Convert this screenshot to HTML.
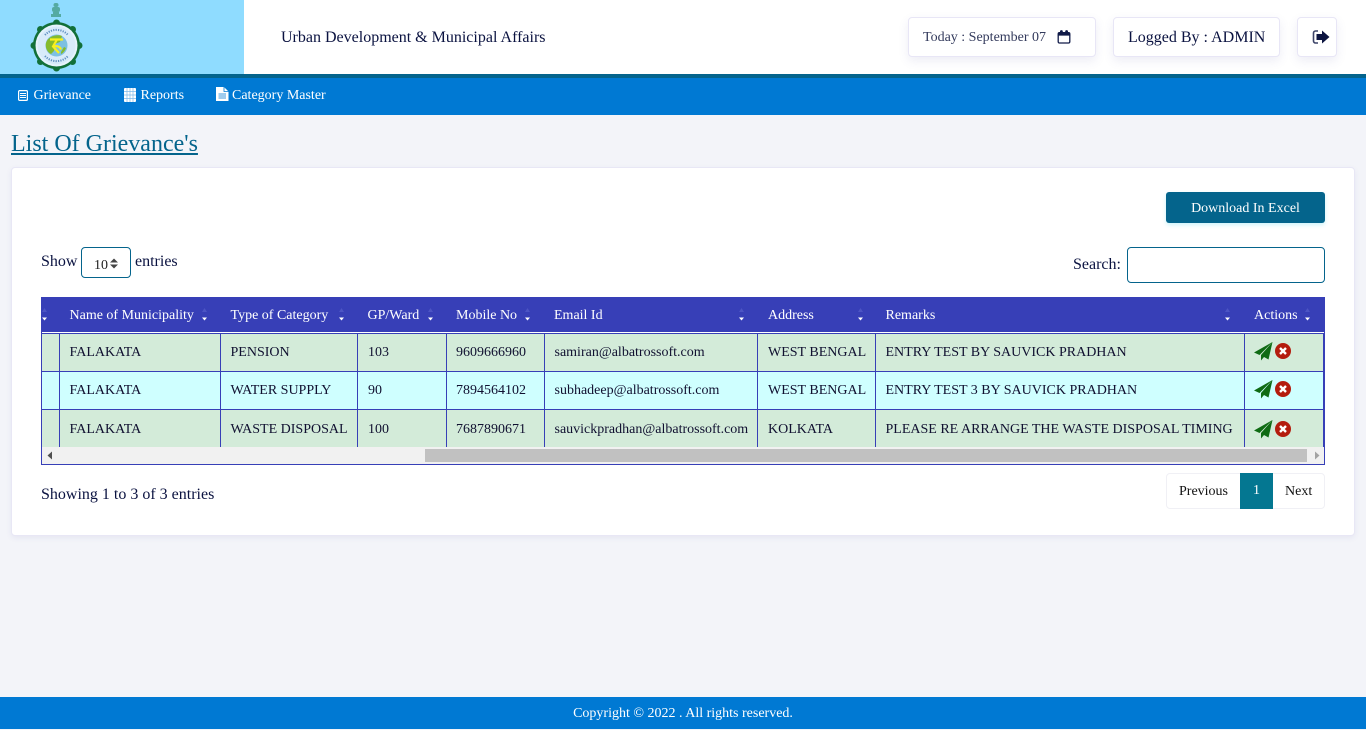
<!DOCTYPE html>
<html><head><meta charset="utf-8"><title>List Of Grievance's</title>
<style>
*{box-sizing:border-box}
html,body{margin:0;padding:0;width:1366px;height:729px;overflow:hidden;background:#f3f4f9;font-family:"Liberation Serif",serif;color:#0a1240}
.a{position:absolute;white-space:nowrap}
.box{position:absolute;background:#fff;border:1px solid #e8e6f6;border-radius:4px;box-shadow:0 4px 10px rgba(80,80,160,.1)}
.nav{color:#fff;font-size:14px;line-height:16px;top:88px}
.th{color:#fff;font-size:14px;line-height:16px;top:308px}
.td{color:#101030;font-size:14px;line-height:16px}
.v{position:absolute;width:1px;background:#373fb7;top:333px;height:114px}
.h{position:absolute;height:1px;left:42px;width:1282px;background:#373fb7}
.s{position:absolute;top:308px;width:7px;height:13px}
</style></head><body>
<div class="a" style="left:0;top:0;width:1366px;height:74px;background:#fff"></div>
<div class="a" style="left:0;top:0;width:244px;height:74px;background:#8fdcff"></div>
<div class="a" style="left:0;top:74px;width:1366px;height:4px;background:#04648c"></div>
<div class="a" style="left:0;top:78px;width:1366px;height:37px;background:#0079d3"></div>

<svg class="a" style="left:28px;top:0" width="56" height="72" viewBox="0 0 56 72">
<g fill="#2e8a66" opacity=".6"><rect x="25.500" y="3" width="5" height="4" rx="2"/><rect x="24" y="7" width="8" height="5" rx="2"/><rect x="25" y="12" width="6" height="2"/><rect x="23" y="14" width="10" height="3"/></g>
<circle cx="28.500" cy="45.500" r="23.500" fill="#127039"/>
<g fill="#127039"><circle cx="28.500" cy="23" r="3.500"/><circle cx="44.500" cy="29.500" r="3.500"/><circle cx="51" cy="45.500" r="3.500"/><circle cx="44.500" cy="61.500" r="3.500"/><circle cx="28.500" cy="68" r="3.500"/><circle cx="12.500" cy="61.500" r="3.500"/><circle cx="6" cy="45.500" r="3.500"/><circle cx="12.500" cy="29.500" r="3.500"/></g>
<circle cx="28.500" cy="45.500" r="21" fill="#e6f3fc"/>
<circle cx="28.500" cy="45.500" r="19" fill="#d8ebfa"/>
<path d="M17 35a15.500 15.500 0 0 1 23 0M17 56a15.500 15.500 0 0 0 23 0" fill="none" stroke="#5f8fc0" stroke-width="2" stroke-dasharray="1.200 1.200"/>
<circle cx="28.500" cy="45.500" r="11" fill="#7cc0e2"/>
<path d="M18 43c2-7 11-9 16-7l-2 6-5 2-1 7-3 3c-4-2-6-7-5-11z" fill="#86bb2c"/>
<path d="M33 52l3-5 2 1c-1 3-3 5-5 6z" fill="#86bb2c"/>
<path d="M22 39.500h13M29 39.500l-4 7 6 6.500M25 46.500c4-1 7 0 8 3" fill="none" stroke="#f8f01c" stroke-width="2.200"/>
</svg>

<div class="a" style="left:281px;top:29px;font-size:16px;line-height:18px;color:#0a1240">Urban Development &amp; Municipal Affairs</div>

<div class="box" style="left:908px;top:17px;width:188px;height:40px"></div>
<div class="a" style="left:923px;top:30px;font-size:14px;line-height:16px;color:#333a5c">Today : September 07</div>
<svg class="a" style="left:1057px;top:30px" width="14" height="14" viewBox="0 0 14 14"><path d="M1.200 5h11.600v6.800a1.200 1.200 0 0 1-1.200 1.200H2.400a1.200 1.200 0 0 1-1.200-1.200z" fill="none" stroke="#101a48" stroke-width="1.300"/><path d="M.6 5.500V3.500C.6 2.700 1.300 2 2.100 2H3V1.500a1.200 1.200 0 0 1 2.800 0V2h2.400v-.5a1.200 1.200 0 0 1 2.800 0V2h.9c.8 0 1.500.7 1.500 1.500v2z" fill="#101a48"/></svg>

<div class="box" style="left:1113px;top:17px;width:167px;height:40px"></div>
<div class="a" style="left:1128px;top:28px;font-size:16px;line-height:19px;color:#0a1240">Logged By : ADMIN</div>

<div class="box" style="left:1297px;top:17px;width:40px;height:40px"></div>
<svg class="a" style="left:1312px;top:29px" width="18" height="16" viewBox="0 0 18 16"><path d="M6 2H3.500A2 2 0 0 0 1.500 4v8a2 2 0 0 0 2 2H6" fill="none" stroke="#3c4468" stroke-width="1.600"/><path d="M10 1.500L17.500 8 10 14.500V11H4.500V5H10z" fill="#0c1440"/></svg>

<svg class="a" style="left:18px;top:90px" width="10" height="11" viewBox="0 0 10 11"><rect x=".6" y=".6" width="8.800" height="9.800" rx="1" fill="none" stroke="#fff" stroke-width="1.200"/><path d="M2 3.500h6M2 5.500h6M2 7.500h6" stroke="#fff"/></svg>
<div class="a nav" style="left:33.500px">Grievance</div>
<svg class="a" style="left:124px;top:88px" width="12" height="14" viewBox="0 0 12 14"><rect width="12" height="14" rx="1" fill="#fff"/><path d="M0 3.500h12M0 7h12M0 10.500h12M3 0v14M6 0v14M9 0v14" stroke="#7fbbea" stroke-width=".7"/></svg>
<div class="a nav" style="left:140.500px">Reports</div>
<svg class="a" style="left:216px;top:87px" width="13" height="14" viewBox="0 0 13 14"><path d="M0 0h8l4.500 4.500V14H0z" fill="#fff"/><path d="M8 0v4.500h4.500" fill="none" stroke="#0079d3" stroke-width=".8"/><path d="M2.500 7h7.500M2.500 9h7.500M2.500 11h7.500" stroke="#0079d3" stroke-width=".8"/></svg>
<div class="a nav" style="left:232px">Category Master</div>

<div class="a" style="left:11px;top:130px;font-size:24px;line-height:29px;color:#04648c;text-decoration:underline">List Of Grievance's</div>

<div class="a" style="left:11px;top:167px;width:1344px;height:369px;background:#fff;border:1px solid #e8e7f5;border-radius:4px;box-shadow:0 2px 6px rgba(80,80,160,.08)"></div>

<div class="a" style="left:1166px;top:192px;width:159px;height:31px;background:#04648c;border-radius:3px;color:#fff;font-size:14px;line-height:33px;text-align:center;box-shadow:0 2px 4px rgba(0,200,230,.2)">Download In Excel</div>

<div class="a" style="left:41px;top:253px;font-size:16px;line-height:18px">Show</div>
<div class="a" style="left:81px;top:247px;width:50px;height:31px;border:1px solid #04648c;border-radius:4px;background:#fff"></div>
<div class="a" style="left:94px;top:258px;font-size:14px;line-height:16px;color:#222">10</div>
<svg class="a" style="left:109px;top:258px" width="10" height="11" viewBox="0 0 10 11"><path d="M5 .5L9 4.500H1zM5 10.500L1 6.500h8z" fill="#444"/></svg>
<div class="a" style="left:135px;top:253px;font-size:16px;line-height:18px">entries</div>

<div class="a" style="left:1073px;top:256px;font-size:16px;line-height:18px">Search:</div>
<div class="a" style="left:1127px;top:247px;width:198px;height:36px;border:1px solid #04648c;border-radius:4px;background:#fff"></div>

<!-- table -->
<div class="a" style="left:41px;top:297px;width:1284px;height:168px;border:1px solid #373fb7;background:#fff"></div>
<div class="a" style="left:41px;top:297px;width:1284px;height:35px;background:#373fb7"></div>
<div class="a" style="left:42px;top:333px;width:1282px;height:38px;background:#d3ebd9"></div>
<div class="a" style="left:42px;top:371px;width:1282px;height:38px;background:#cfffff"></div>
<div class="a" style="left:42px;top:409px;width:1282px;height:38px;background:#d3ebd9"></div>
<div class="h" style="top:333px"></div><div class="h" style="top:371px"></div><div class="h" style="top:409px"></div>
<div class="v" style="left:59px"></div><div class="v" style="left:220px"></div><div class="v" style="left:357px"></div><div class="v" style="left:446px"></div><div class="v" style="left:544px"></div><div class="v" style="left:757px"></div><div class="v" style="left:875px"></div><div class="v" style="left:1244px"></div><div class="v" style="left:1323px"></div>

<div class="a th" style="left:69.500px">Name of Municipality</div>
<div class="a th" style="left:230.500px">Type of Category</div>
<div class="a th" style="left:367.500px">GP/Ward</div>
<div class="a th" style="left:456px">Mobile No</div>
<div class="a th" style="left:554px">Email Id</div>
<div class="a th" style="left:768px">Address</div>
<div class="a th" style="left:885.500px">Remarks</div>
<div class="a th" style="left:1254px">Actions</div>

<svg width="0" height="0" style="position:absolute"><defs><g id="srt"><path d="M3.500 0L6 4H1z" fill="#4c54c4"/><path d="M3.500 12.500L6 9.500H1z" fill="#fff"/></g></defs></svg>
<svg class="s" style="left:41px" viewBox="0 0 7 13"><use href="#srt"/></svg>
<svg class="s" style="left:201px" viewBox="0 0 7 13"><use href="#srt"/></svg>
<svg class="s" style="left:338px" viewBox="0 0 7 13"><use href="#srt"/></svg>
<svg class="s" style="left:427px" viewBox="0 0 7 13"><use href="#srt"/></svg>
<svg class="s" style="left:524px" viewBox="0 0 7 13"><use href="#srt"/></svg>
<svg class="s" style="left:738px" viewBox="0 0 7 13"><use href="#srt"/></svg>
<svg class="s" style="left:857px" viewBox="0 0 7 13"><use href="#srt"/></svg>
<svg class="s" style="left:1224px" viewBox="0 0 7 13"><use href="#srt"/></svg>
<svg class="s" style="left:1304px" viewBox="0 0 7 13"><use href="#srt"/></svg>

<div class="a td" style="left:69.500px;top:345px">FALAKATA</div>
<div class="a td" style="left:230.500px;top:345px">PENSION</div>
<div class="a td" style="left:368px;top:345px">103</div>
<div class="a td" style="left:456px;top:345px">9609666960</div>
<div class="a td" style="left:554.500px;top:345px">samiran@albatrossoft.com</div>
<div class="a td" style="left:768px;top:345px">WEST BENGAL</div>
<div class="a td" style="left:885.500px;top:345px">ENTRY TEST BY SAUVICK PRADHAN</div>

<div class="a td" style="left:69.500px;top:383px">FALAKATA</div>
<div class="a td" style="left:230.500px;top:383px">WATER SUPPLY</div>
<div class="a td" style="left:368px;top:383px">90</div>
<div class="a td" style="left:456px;top:383px">7894564102</div>
<div class="a td" style="left:554.500px;top:383px">subhadeep@albatrossoft.com</div>
<div class="a td" style="left:768px;top:383px">WEST BENGAL</div>
<div class="a td" style="left:885.500px;top:383px">ENTRY TEST 3 BY SAUVICK PRADHAN</div>

<div class="a td" style="left:69.500px;top:422px">FALAKATA</div>
<div class="a td" style="left:230.500px;top:422px">WASTE DISPOSAL</div>
<div class="a td" style="left:368px;top:422px">100</div>
<div class="a td" style="left:456px;top:422px">7687890671</div>
<div class="a td" style="left:554.500px;top:422px">sauvickpradhan@albatrossoft.com</div>
<div class="a td" style="left:768px;top:422px">KOLKATA</div>
<div class="a td" style="left:885.500px;top:422px">PLEASE RE ARRANGE THE WASTE DISPOSAL TIMING</div>

<svg width="0" height="0" style="position:absolute"><defs><g id="act"><path d="M18.500 0L0 10.500l5.500 2.500zM18.500 0L7 13v5.500l3-3.500 4.500 2.500z" fill="#0f6b14"/><circle cx="29" cy="9" r="8" fill="#b41c0e"/><path d="M26 6l6 6M32 6l-6 6" stroke="#fff" stroke-width="2.400"/></g></defs></svg>
<svg class="a" style="left:1254px;top:342px" width="38" height="19" viewBox="0 0 38 19"><use href="#act"/></svg>
<svg class="a" style="left:1254px;top:380px" width="38" height="19" viewBox="0 0 38 19"><use href="#act"/></svg>
<svg class="a" style="left:1254px;top:420px" width="38" height="19" viewBox="0 0 38 19"><use href="#act"/></svg>

<!-- scrollbar -->
<div class="a" style="left:42px;top:447px;width:1282px;height:17px;background:#f1f1f1"></div>
<div class="a" style="left:425px;top:449px;width:882px;height:13px;background:#c1c1c1"></div>
<svg class="a" style="left:47px;top:451px" width="6" height="9" viewBox="0 0 6 9"><path d="M5 .5v8L.5 4.500z" fill="#505050"/></svg>
<svg class="a" style="left:1314px;top:451px" width="6" height="9" viewBox="0 0 6 9"><path d="M1 .5v8l4.500-4z" fill="#a3a3a3"/></svg>

<div class="a" style="left:41px;top:486px;font-size:16px;line-height:18px">Showing 1 to 3 of 3 entries</div>

<div class="a" style="left:1166px;top:473px;width:159px;height:36px;border:1px solid #f0f0f5;border-radius:4px;background:#fff"></div>
<div class="a" style="left:1179px;top:484px;font-size:14px;line-height:16px;color:#111">Previous</div>
<div class="a" style="left:1240px;top:473px;width:33px;height:36px;background:#047791;color:#fff;font-size:14px;line-height:36px;text-align:center">1</div>
<div class="a" style="left:1285px;top:484px;font-size:14px;line-height:16px;color:#111">Next</div>

<div class="a" style="left:0;top:697px;width:1366px;height:32px;background:#0079d3;color:#fff;font-size:14px;line-height:33px;text-align:center">Copyright © 2022 . All rights reserved.</div>
</body></html>
